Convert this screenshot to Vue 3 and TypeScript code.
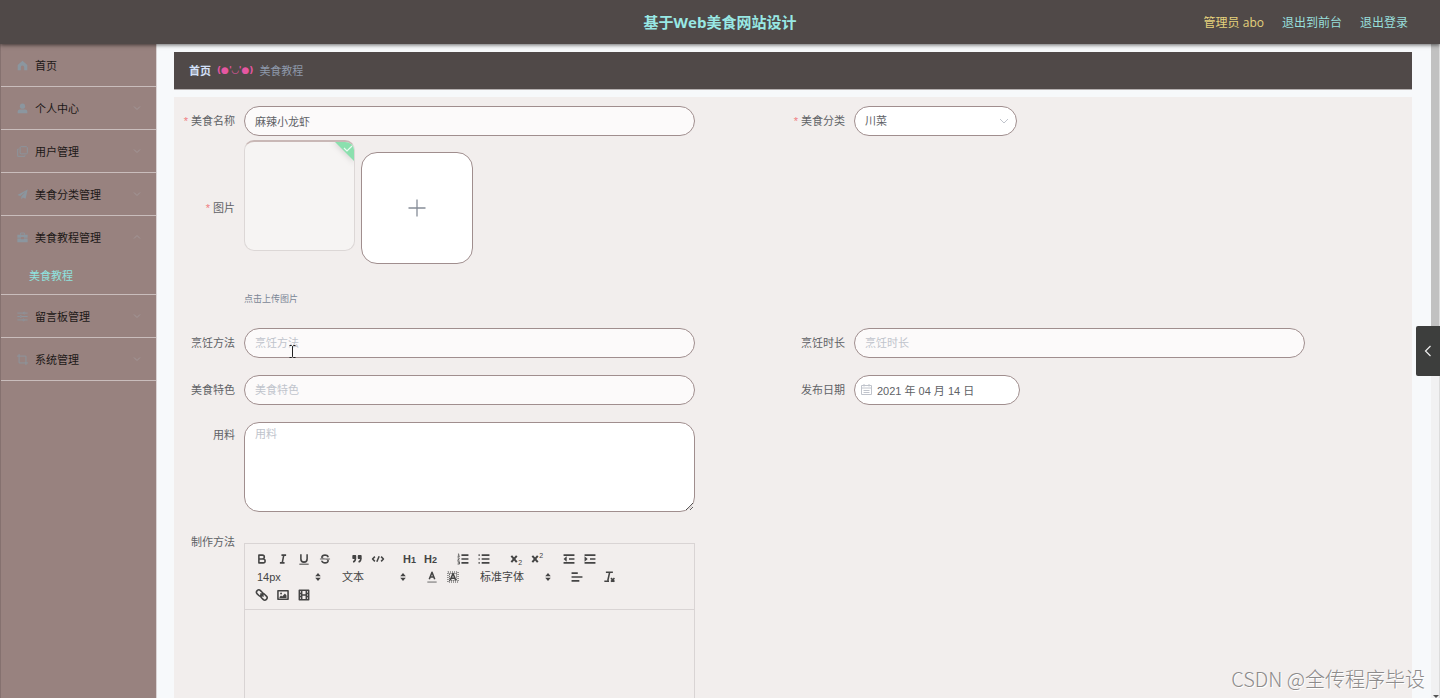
<script setup lang="ts">
import { ref } from 'vue'

interface MenuEntry {
  label: string
  icon: string
  expandable: boolean
  children?: string[]
}

const menu: MenuEntry[] = [
  { label: '首页', icon: 'home', expandable: false },
  { label: '个人中心', icon: 'user', expandable: true },
  { label: '用户管理', icon: 'copy', expandable: true },
  { label: '美食分类管理', icon: 'plane', expandable: true },
  { label: '美食教程管理', icon: 'case', expandable: true, children: ['美食教程'] },
  { label: '留言板管理', icon: 'sliders', expandable: true },
  { label: '系统管理', icon: 'crop', expandable: true },
]

const form = ref({
  name: '麻辣小龙虾',
  category: '川菜',
  method: '',
  duration: '',
  feature: '',
  date: '2021 年 04 月 14 日',
  materials: '',
})
</script>

<template>
  <div class="shell">
    <header class="topbar">
      <h1 class="title">基于Web美食网站设计</h1>
      <nav class="account">
        <span class="who">管理员 abo</span>
        <a href="#front">退出到前台</a>
        <a href="#logout">退出登录</a>
      </nav>
    </header>

    <div class="body">
      <aside class="sidebar">
        <ul class="menu">
          <li v-for="m in menu" :key="m.label" class="menu-group">
            <a href="#" class="menu-item">
              <svg class="menu-icon" viewBox="0 0 16 16">
                <path v-if="m.icon === 'home'" class="f" d="M8 1 1 7.4V15h4.6v-4.5a2.4 2.4 0 0 1 4.8 0V15H15V7.4Z" />
                <template v-else-if="m.icon === 'user'">
                  <circle class="f" cx="8" cy="4.6" r="3.8" />
                  <path class="f" d="M1 15v-2.5Q1 9.5 4 9.5h8q3 0 3 3V15Z" />
                </template>
                <template v-else-if="m.icon === 'copy'">
                  <rect class="s" x="4.5" y="1" width="10.5" height="10.5" rx="1.5" />
                  <path class="s" d="M2.500 4.500H1V15h10.500v-1.500" />
                </template>
                <path v-else-if="m.icon === 'plane'" class="f" d="M15.500.800.500 8.600l4.200 1.700L13 3.500 6.300 11v4.200l2.300-3L12.500 14Z" />
                <template v-else-if="m.icon === 'case'">
                  <path class="s" d="M5.200 4V1.500h5.600V4" />
                  <path class="f" d="M.500 4h15v4.300H10V7.300H6v1H.500ZM.500 9.300H6v1.200h4V9.300h5.500V15H.500Z" />
                </template>
                <template v-else-if="m.icon === 'sliders'">
                  <path class="s" d="M.500 3H9M12 3h3.500M.500 8H4M7 8h8.500M.500 13H8M11 13h4.500" />
                  <circle class="s" cx="10.500" cy="3" r="1.300" />
                  <circle class="s" cx="5.500" cy="8" r="1.300" />
                  <circle class="s" cx="9.500" cy="13" r="1.300" />
                </template>
                <path v-else class="s" d="M3 0v13h13M0 3h13v13" />
              </svg>
              <span class="menu-text">{{ m.label }}</span>
              <svg v-if="m.expandable" class="menu-arrow" viewBox="0 0 8 8">
                <path :d="m.children ? 'M1 5.500 4 2.500 7 5.500' : 'M1 2.500 4 5.500 7 2.500'" />
              </svg>
            </a>
            <a v-for="c in m.children" :key="c" href="#" class="submenu-item">{{ c }}</a>
          </li>
        </ul>
      </aside>

      <main class="main">
        <nav class="crumbs">
          <a href="#" class="crumb-home">首页</a>
          <span class="crumb-sep">(●'◡'●)</span>
          <span class="crumb-here">美食教程</span>
        </nav>

        <form class="form" @submit.prevent>
          <div class="row">
            <div class="field">
              <label class="label required" for="name">美食名称</label>
              <input id="name" v-model="form.name" class="control" type="text" />
            </div>
            <div class="field">
              <label class="label required" for="category">美食分类</label>
              <div class="select-wrap">
                <select id="category" v-model="form.category" class="control solid">
                  <option>川菜</option>
                </select>
                <svg class="select-arrow" viewBox="0 0 10 10"><path d="M1 3 5 7 9 3" /></svg>
              </div>
            </div>
          </div>

          <div class="field upload-row">
            <span class="label required upload-label">图片</span>
            <div class="upload">
              <div class="tiles">
                <div class="thumb">
                  <span class="done">
                    <svg viewBox="0 0 22 22">
                      <path class="corner" d="M0 0H22V22Z" />
                      <path class="tick" d="M11 8l3 3 5-5" />
                    </svg>
                  </span>
                </div>
                <button type="button" class="add" aria-label="点击上传图片">
                  <svg viewBox="0 0 18 18"><path d="M9 0.500V17.500M0.500 9H17.500" /></svg>
                </button>
              </div>
              <p class="tip">点击上传图片</p>
            </div>
          </div>

          <div class="row gap-lg">
            <div class="field">
              <label class="label" for="method">烹饪方法</label>
              <div class="pointer-host">
                <input id="method" v-model="form.method" class="control" type="text" placeholder="烹饪方法" />
                <svg class="pointer" viewBox="0 0 7 13">
                  <path d="M0.500 0.500H2.500L3.500 1.500 4.500 0.500H6.500M3.500 1.500V11.500M0.500 12.500H2.500L3.500 11.500 4.500 12.500H6.500" />
                </svg>
              </div>
            </div>
            <div class="field">
              <label class="label" for="duration">烹饪时长</label>
              <input id="duration" v-model="form.duration" class="control" type="text" placeholder="烹饪时长" />
            </div>
          </div>

          <div class="row gap">
            <div class="field">
              <label class="label" for="feature">美食特色</label>
              <input id="feature" v-model="form.feature" class="control" type="text" placeholder="美食特色" />
            </div>
            <div class="field">
              <label class="label" for="date">发布日期</label>
              <div class="date-wrap">
                <svg class="date-icon" viewBox="0 0 11 11">
                  <path d="M0.500 1.500H10.500V10.500H0.500ZM0.500 4H10.500M3 0V2.500M8 0V2.500M2.500 6.500H8.500M2.500 8.500H8.500" />
                </svg>
                <input id="date" v-model="form.date" class="control solid date" type="text" />
              </div>
            </div>
          </div>

          <div class="row gap">
            <div class="field">
              <label class="label label-area" for="materials">用料</label>
              <textarea id="materials" v-model="form.materials" class="control solid area" placeholder="用料"></textarea>
            </div>
          </div>

          <div class="row gap-sm">
            <div class="field">
              <span id="steps-label" class="label">制作方法</span>
              <div class="editor" aria-labelledby="steps-label">
                <div class="toolbar">
                  <span class="group">
                    <button type="button" aria-label="bold"><svg viewBox="0 0 18 18"><path class="q" d="M5 4H9.500a2.500 2.500 0 0 1 0 5H5ZM5 9h5.500a2.500 2.500 0 0 1 0 5H5Z" /></svg></button>
                    <button type="button" aria-label="italic"><svg viewBox="0 0 18 18"><path class="q" d="M7 4H13M5 14H11M8 14 10 4" /></svg></button>
                    <button type="button" aria-label="underline"><svg viewBox="0 0 18 18"><path class="q" d="M5 3V9a4 4 0 0 0 8 0V3" /><rect class="qf" x="3" y="15" width="12" height="1.300" /></svg></button>
                    <button type="button" aria-label="strike"><svg viewBox="0 0 18 18"><path class="q thin" d="M2.500 9H15.500" /><path class="qf" d="M9.007,8C6.542,7.791,6,7.519,6,6.500,6,5.792,7.283,5,9,5c1.571,0,2.765.679,2.969,1.309a1,1,0,0,0,1.900-.617C13.356,4.106,11.354,3,9,3,6.200,3,4,4.538,4,6.500a3.200,3.200,0,0,0,.500,1.843Z" /><path class="qf" d="M8.984,10C11.457,10.208,12,10.479,12,11.500c0,.708-1.283,1.500-3,1.500-1.571,0-2.765-.679-2.969-1.309a1,1,0,1,0-1.900.617C4.644,13.894,6.646,15,9,15c2.800,0,5-1.538,5-3.500a3.200,3.200,0,0,0-.500-1.843Z" /></svg></button>
                  </span>
                  <span class="group">
                    <button type="button" aria-label="quote"><svg viewBox="0 0 18 18"><path class="q fill" d="M4 5h3v3H4ZM11 5h3v3h-3Z" /><path class="q" d="M7 8c0 4-3 5-3 5M14 8c0 4-3 5-3 5" /></svg></button>
                    <button type="button" aria-label="code"><svg viewBox="0 0 18 18"><path class="q" d="M5 6 2 9 5 12M13 6 16 9 13 12M10.500 5.500 7.500 12.500" /></svg></button>
                  </span>
                  <span class="group">
                    <button type="button" class="heading">H<small>1</small></button>
                    <button type="button" class="heading">H<small>2</small></button>
                  </span>
                  <span class="group">
                    <button type="button" aria-label="ordered list"><svg viewBox="0 0 18 18"><path class="q" d="M7 4H16M7 9H16M7 14H16" /><path class="q thin" d="M2.500 2.500H3.500V5.500M2 5.500H5M2 7.500H4V9L2 10.500H4.500M2 12.500H4.500V15.500H2M2.500 14H4" /></svg></button>
                    <button type="button" aria-label="bullet list"><svg viewBox="0 0 18 18"><path class="q" d="M6 4H16M6 9H16M6 14H16M2 4H3.500M2 9H3.500M2 14H3.500" /></svg></button>
                  </span>
                  <span class="group">
                    <button type="button" aria-label="subscript"><svg viewBox="0 0 18 18"><path class="q heavy" d="M3 5 10 13M10 5 3 13" /><text x="12" y="17">2</text></svg></button>
                    <button type="button" aria-label="superscript"><svg viewBox="0 0 18 18"><path class="q heavy" d="M3 5 10 13M10 5 3 13" /><text x="12" y="8">2</text></svg></button>
                  </span>
                  <span class="group">
                    <button type="button" aria-label="outdent"><svg viewBox="0 0 18 18"><path class="q" d="M2 4H16M9 9H16M2 14H16" /><path class="qf" d="M6 5.500V12.500L2 9Z" /></svg></button>
                    <button type="button" aria-label="indent"><svg viewBox="0 0 18 18"><path class="q" d="M2 4H16M9 9H16M2 14H16" /><path class="qf" d="M2 5.500V12.500L6 9Z" /></svg></button>
                  </span>
                  <span class="group picker">
                    <select aria-label="size"><option>14px</option></select>
                    <svg class="updown" viewBox="0 0 18 18"><path class="qf" d="M4 7.500 9 2 14 7.500ZM4 10.500 9 16 14 10.500Z" /></svg>
                  </span>
                  <span class="group picker">
                    <select aria-label="header"><option>文本</option></select>
                    <svg class="updown" viewBox="0 0 18 18"><path class="qf" d="M4 7.500 9 2 14 7.500ZM4 10.500 9 16 14 10.500Z" /></svg>
                  </span>
                  <span class="group">
                    <button type="button" aria-label="color"><svg viewBox="0 0 18 18"><path class="q thin" d="M3 15.500H15" /><path class="q" d="M5.500 12 9 3 12.500 12M6.500 9H11.500" /></svg></button>
                    <button type="button" aria-label="background"><svg viewBox="0 0 18 18"><rect class="q dots" x="2.500" y="2.500" width="13" height="13" /><rect class="q dots" x="4.500" y="4.500" width="9" height="9" /><path class="q" d="M5.500 13 9 4.500 12.500 13M6.500 10.500H11.500" /></svg></button>
                  </span>
                  <span class="group picker wide">
                    <select aria-label="font"><option>标准字体</option></select>
                    <svg class="updown" viewBox="0 0 18 18"><path class="qf" d="M4 7.500 9 2 14 7.500ZM4 10.500 9 16 14 10.500Z" /></svg>
                  </span>
                  <span class="group">
                    <button type="button" aria-label="align"><svg viewBox="0 0 18 18"><path class="q" d="M2 4H10M2 9H16M2 14H12" /></svg></button>
                  </span>
                  <span class="group">
                    <button type="button" aria-label="clean"><svg viewBox="0 0 18 18"><path class="q" d="M5 3H14M9.800 3 7.500 13.500M3 14.500H9M11.500 10.500 16 15M16 10.500 11.500 15" /></svg></button>
                  </span>
                  <span class="group">
                    <button type="button" aria-label="link"><svg viewBox="0 0 18 18"><rect class="q" x="1.500" y="3.500" width="9" height="6" rx="3" transform="rotate(45 6 6.500)" /><rect class="q" x="7" y="8.500" width="9" height="6" rx="3" transform="rotate(45 11.500 11.500)" /><path class="q" d="M7 7 11 11" /></svg></button>
                    <button type="button" aria-label="image"><svg viewBox="0 0 18 18"><rect class="q" x="2.500" y="3.500" width="13" height="11" /><circle class="qf" cx="6.500" cy="7" r="1.200" /><path class="qf" d="M4.500 13V11.500L6.500 9.500 8 11 11.500 7 13.500 9.500V13Z" /></svg></button>
                    <button type="button" aria-label="video"><svg viewBox="0 0 18 18"><path class="q" d="M3 3H15V15H3ZM6 3V15M12 3V15M6 9H12M3 7H6M3 11H6M12 7H15M12 11H15" /></svg></button>
                  </span>
                </div>
                <div class="editor-body" contenteditable="true" role="textbox" aria-labelledby="steps-label"></div>
              </div>
            </div>
          </div>
        </form>
      </main>

      <div class="scroll-track"><div class="scroll-thumb"></div><span class="scroll-down"></span></div>
    </div>

    <button type="button" class="drawer" aria-label="展开">
      <svg viewBox="0 0 8 12"><path d="M6.500 1 1.500 6 6.500 11" /></svg>
    </button>
    <div class="watermark">CSDN @全传程序毕设</div>
  </div>
</template>

<style>
html,
body {
  margin: 0;
  background: #f7f9fb;
}
</style>

<style scoped>
* {
  box-sizing: border-box;
}
.shell {
  position: relative;
  display: flex;
  flex-direction: column;
  height: 100vh;
  overflow: hidden;
  background: #f7f9fb;
  color: #606266;
  font-family: 'Liberation Sans', 'Noto Sans CJK SC', sans-serif;
  font-size: 11px;
}
a {
  text-decoration: none;
  color: inherit;
}
button,
input,
select,
textarea {
  font: inherit;
  color: inherit;
  margin: 0;
}
.topbar {
  position: relative;
  z-index: 1;
  flex: none;
  display: grid;
  grid-template-columns: 1fr auto 1fr;
  align-items: center;
  height: 44px;
  padding: 0 32px;
  background: #504948;
  box-shadow: 0 1px 4px rgba(0, 0, 0, 0.6);
  font-family: 'Open Sans', 'Noto Sans CJK SC', sans-serif;
}
.title {
  grid-column: 2;
  margin: 0;
  color: #98e8e4;
  font-size: 15px;
  line-height: 44px;
  font-weight: 700;
}
.account {
  display: flex;
  justify-content: flex-end;
  gap: 18px;
  padding-top: 2px;
  color: #98dfdb;
  font-size: 12px;
  line-height: 42px;
}
.who {
  color: #e5d27c;
}
.body {
  flex: 1;
  display: flex;
  min-height: 0;
}
.sidebar {
  flex: none;
  width: 157px;
  background: #98827f;
  border-left: 1px solid #85716f;
  border-right: 1px solid #d9d3d4;
}
.menu {
  list-style: none;
  margin: 0;
  padding: 0;
}
.menu-group {
  border-bottom: 1px solid #c9bdbc;
}
.menu-item {
  display: flex;
  align-items: center;
  height: 42px;
  padding: 0 15px 0 16px;
  color: #1c1817;
}
.menu-icon {
  width: 11px;
  height: 11px;
  margin-right: 7px;
}
.f {
  fill: #8b969f;
}
.s {
  fill: none;
  stroke: #8b969f;
  stroke-width: 1.3;
}
.menu-text {
  flex: 1;
}
.menu-arrow {
  width: 8px;
  height: 8px;
}
.menu-arrow path {
  fill: none;
  stroke: #a39798;
}
.submenu-item {
  display: block;
  height: 36px;
  padding-left: 28px;
  color: #8fe3df;
  line-height: 36px;
}
.main {
  flex: 1;
  min-width: 0;
  display: flex;
  flex-direction: column;
  padding: 8px 19px 0 17px;
}
.crumbs {
  flex: none;
  display: flex;
  align-items: center;
  gap: 6px;
  height: 38px;
  padding: 0 15px 1px;
  background: #504948;
  border-bottom: 1px solid #b5b0b0;
}
.crumb-home {
  color: #d3e0f8;
  font-weight: 700;
}
.crumb-sep {
  color: #e657a2;
  font-family: 'DejaVu Sans', sans-serif;
  font-size: 9px;
  font-weight: 700;
}
.crumb-here {
  color: #8e99ab;
}
.form {
  flex: 1;
  margin-top: 7px;
  padding: 9px 8px 0 10px;
  background: #f2eeed;
}
.row {
  display: grid;
  grid-template-columns: 1fr 1fr;
}
.gap-sm {
  margin-top: 15px;
}
.gap {
  margin-top: 17px;
}
.gap-lg {
  margin-top: 21px;
}
.field {
  display: grid;
  grid-template-columns: 60px minmax(0, 82fr) 18fr;
  align-items: start;
}
.label {
  padding-right: 9px;
  line-height: 30px;
  white-space: nowrap;
  display: flex;
  justify-content: flex-end;
}
.required::before {
  content: '*';
  margin-right: 3px;
  color: #f07c80;
}
.label-area {
  line-height: 26px;
}
.control {
  display: block;
  width: 100%;
  height: 30px;
  padding: 0 10px;
  background: #fcfafa;
  border: 1px solid #a08e8e;
  border-radius: 15px;
  outline: none;
}
.solid {
  background: #fff;
}
.control::placeholder {
  color: #c0c4cc;
  opacity: 1;
}
select {
  appearance: none;
}
.select-wrap,
.date-wrap,
.pointer-host,
.picker {
  position: relative;
}
.select-wrap {
  width: 163px;
}
.date-wrap {
  width: 166px;
}
.select-arrow {
  position: absolute;
  right: 8px;
  top: 10px;
  width: 10px;
  height: 10px;
  pointer-events: none;
}
.select-arrow path,
.date-icon path {
  fill: none;
  stroke: #c0c4cc;
}
.date-icon {
  position: absolute;
  left: 7px;
  top: 9px;
  width: 11px;
  height: 11px;
}
.date {
  padding-left: 22px;
}
.area {
  height: 90px;
  padding: 4px 10px;
  line-height: 15px;
  resize: vertical;
}
.pointer {
  position: absolute;
  left: 45px;
  top: 17px;
  width: 7px;
  height: 13px;
}
.pointer path {
  fill: none;
  stroke: #222;
}
.upload-row {
  margin-top: 4px;
}
.upload-label {
  line-height: 136px;
}
.tiles {
  display: flex;
  gap: 6px;
}
.thumb {
  position: relative;
  width: 111px;
  height: 111px;
  background: #f6f4f3;
  border: 1px solid #dcd7d6;
  border-top: 2px solid #c9b8b6;
  border-radius: 10px;
  overflow: hidden;
}
.done {
  position: absolute;
  top: -2px;
  right: -1px;
  width: 22px;
  height: 22px;
}
.done svg {
  display: block;
  overflow: visible;
  filter: drop-shadow(0 1px 3px rgba(0, 0, 0, 0.15));
}
.corner {
  fill: #8be0ae;
}
.tick {
  fill: none;
  stroke: #e9fbf1;
  stroke-width: 1.2;
}
.add {
  display: grid;
  place-items: center;
  width: 112px;
  height: 112px;
  margin-top: 12px;
  padding: 0;
  background: #fff;
  border: 1px solid #a08e8e;
  border-radius: 16px;
}
.add svg {
  width: 18px;
  height: 18px;
}
.add path {
  fill: none;
  stroke: #868d98;
  stroke-width: 1.3;
}
.tip {
  margin: 27px 0 0;
  color: #7b8696;
  font-size: 9px;
  line-height: 16px;
}
.editor {
  margin-top: 16px;
  border: 1px solid #d9d4d4;
}
.toolbar {
  display: flex;
  flex-wrap: wrap;
  column-gap: 11px;
  padding: 6px 10px 5px 6px;
  border-bottom: 1px solid #d9d4d4;
  color: #444;
}
.group {
  display: flex;
  height: 18px;
}
.group button {
  display: flex;
  align-items: center;
  justify-content: center;
  width: 21px;
  height: 18px;
  padding: 0;
  background: none;
  border: 0;
}
.group button svg {
  width: 14px;
  height: 14px;
}
.group .heading {
  font-size: 11px;
  font-weight: 700;
  align-items: baseline;
  line-height: 18px;
}
.heading small {
  font-size: 9px;
}
.group text {
  fill: #444;
  font-size: 9px;
}
.q {
  fill: none;
  stroke: #444;
  stroke-width: 2;
  stroke-linejoin: round;
}
.thin {
  stroke-width: 1;
}
.heavy {
  stroke-width: 2.6;
}
.fill,
.qf {
  fill: #444;
}
.dots {
  stroke-width: 1.3;
  stroke-dasharray: 1.3 1.3;
}
.picker {
  width: 74px;
}
.wide {
  width: 81px;
}
.picker select {
  width: 100%;
  height: 18px;
  padding: 0 6px;
  background: none;
  border: 0;
}
.updown {
  position: absolute;
  right: 2px;
  top: 4px;
  width: 10px;
  height: 10px;
  pointer-events: none;
}
.editor-body {
  min-height: 200px;
  outline: none;
}
.scroll-track {
  position: relative;
  flex: none;
  width: 9px;
  background: #f1f1f2;
  border-right: 1px solid #dcdcdc;
}
.scroll-thumb {
  height: 48%;
  background: #c1c1c1;
}
.scroll-down {
  position: absolute;
  right: 0;
  bottom: 0;
  border: 3px solid transparent;
  border-top-color: #555;
  border-bottom: 0;
}
.drawer {
  position: absolute;
  z-index: 2;
  right: 0;
  top: calc(50% - 23px);
  display: grid;
  place-items: center;
  width: 24px;
  height: 50px;
  padding: 0;
  background: #3d3e3d;
  border: 0;
  border-radius: 2px 0 0 2px;
}
.drawer svg {
  width: 8px;
  height: 12px;
}
.drawer path {
  fill: none;
  stroke: #eee;
  stroke-width: 1.2;
}
.watermark {
  position: absolute;
  right: 15px;
  bottom: 4px;
  color: #8d8b8b;
  font-family: 'Noto Sans CJK SC', sans-serif;
  font-size: 20px;
  line-height: 30px;
  font-weight: 300;
  text-shadow: 1px 1px 0 #fff;
}
</style>
